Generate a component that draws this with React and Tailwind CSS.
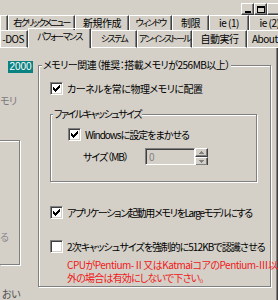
import React from 'react';

const face = 'bg-[#d4d0c8]';

const Check = ({ checked }) => (
    <span className="flex h-[13px] w-[13px] shrink-0 items-center justify-center border border-t-[#808080] border-l-[#808080] border-r-white border-b-white bg-white shadow-[inset_1px_1px_0_#404040,inset_-1px_-1px_0_#d4d0c8]">
        {checked && (
            <svg width="7" height="7" viewBox="0 0 7 7" shapeRendering="crispEdges">
                <polygon points="0,2 2,4 7,-1 7,2 2,7 0,5" fill="#000" />
            </svg>
        )}
    </span>
);

const CheckRow = ({ checked, children, className = '', text = '' }) => (
    <div className={`flex items-center gap-[4px] whitespace-nowrap ${className}`}>
        <Check checked={checked} />
        <span className={text}>{children}</span>
    </div>
);

const WinBtn = ({ children }) => (
    <span className="flex h-[12px] w-[13px] shrink-0 items-center justify-center border border-t-white border-l-white border-r-[#404040] border-b-[#404040] bg-[#d4d0c8] shadow-[inset_-1px_-1px_0_#808080]">
        {children}
    </span>
);

const Tab = ({ w, children, last, kana }) => (
    <div
        className={`flex h-full shrink-0 items-center justify-center whitespace-nowrap border-t border-l border-white ${last ? '' : 'border-r border-r-[#404040] shadow-[inset_-1px_0_0_#808080]'} ${kana ? 'text-[9px] tracking-[-1.7px]' : ''} ${w}`}
    >
        {children}
    </div>
);

const Tab2 = ({ w, children, selected, last, kana }) => (
    <div
        className={`flex shrink-0 items-center justify-center whitespace-nowrap border-t border-l border-white ${last ? '' : 'border-r border-r-[#404040] shadow-[inset_-1px_0_0_#808080]'} ${selected ? 'h-[20px] pb-[3px]' : 'h-[18px] border-b pb-[1px]'} ${kana ? 'text-[9px] tracking-[-1.6px]' : ''} ${w}`}
    >
        {children}
    </div>
);

const SpinBtn = ({ up }) => (
    <span className="flex h-[9px] w-[13px] items-center justify-center border border-t-white border-l-white border-r-[#404040] border-b-[#404040] bg-[#d4d0c8] shadow-[inset_-1px_-1px_0_#808080]">
        <svg width="5" height="3" viewBox="0 0 5 3" shapeRendering="crispEdges">
            <polygon points={up ? '2.5,0 5,3 0,3' : '0,0 5,0 2.5,3'} fill="#808080" />
        </svg>
    </span>
);

export default function App() {
    return (
        <div className={`h-[300px] w-[278px] overflow-hidden ${face} font-['Noto_Sans_CJK_JP',sans-serif] text-[10px] leading-[12px] tracking-[-0.5px] text-black [font-feature-settings:'palt']`}>
            {/* window buttons */}
            <div className="flex h-[15px] items-start pt-[3px] pl-[241px]">
                <WinBtn>
                    <span className="mt-[5px] h-[2px] w-[6px] bg-black" />
                </WinBtn>
                <WinBtn>
                    <span className="h-[7px] w-[8px] border border-t-2 border-black" />
                </WinBtn>
                <WinBtn />
            </div>

            {/* back tab row */}
            <div className="flex h-[15px]">
                <Tab w="w-[8px]" />
                <Tab w="w-[67px]" kana>右クリックメニュー</Tab>
                <Tab w="w-[54px]">新規作成</Tab>
                <Tab w="w-[43px]" kana>ウィンドウ</Tab>
                <Tab w="w-[37px]">制限</Tab>
                <Tab w="w-[40px]">ie (1)</Tab>
                <Tab w="w-[40px]" last>ie (2)</Tab>
            </div>

            {/* front tab row */}
            <div className="flex h-[18px] items-end">
                <Tab2 w="w-[28px] justify-end pr-[3px]">-DOS</Tab2>
                <Tab2 w="w-[63px]" selected kana>パフォーマンス</Tab2>
                <Tab2 w="w-[46px]" kana>システム</Tab2>
                <Tab2 w="w-[55px]" kana>アンインストール</Tab2>
                <Tab2 w="w-[55px]">自動実行</Tab2>
                <Tab2 w="w-[40px] justify-start pl-[4px]" last>About</Tab2>
            </div>

            {/* page */}
            <div className="flex h-[252px] w-[278px] border-r border-r-[#404040] shadow-[inset_-1px_0_0_#808080]">
                <div className="flex w-[38px] shrink-0 flex-col overflow-hidden">
                    <div className="mt-[13px] ml-[8px] flex h-[12px] w-[25px] items-center justify-center bg-[#0a8282] font-['Liberation_Sans',sans-serif] tracking-normal text-white">
                        2000
                    </div>
                    <div className="mt-[22px] whitespace-nowrap text-[#7a7a7a]">モリ</div>
                    <div className="mt-[33px] flex h-[129px] w-[20px] flex-col justify-end border-y border-r border-[#808080] pb-[21px] shadow-[inset_0_1px_0_#fff,1px_1px_0_#fff]">
                        <span className="text-[#8a8a8a]">る</span>
                    </div>
                    <div className="mt-[23px] ml-[2px] whitespace-nowrap text-[#505050]">おい</div>
                </div>

                <fieldset className="mt-[11px] h-[228px] w-[233px] min-w-0 shrink-0 border border-[#808080] shadow-[inset_1px_1px_0_#fff,1px_1px_0_#fff]">
                    <legend className="ml-[3px] bg-[#d4d0c8] px-[1px] leading-[12px] whitespace-nowrap">
                        メモリー関連（推奨：搭載メモリが256MB以上）
                    </legend>

                    <CheckRow checked className="mt-[11px] ml-[11px]">
                        カーネルを常に物理メモリに配置
                    </CheckRow>

                    <fieldset className="mt-[13px] ml-[11px] w-[207px] min-w-0 border border-[#808080] pb-[16px] shadow-[inset_1px_1px_0_#fff,1px_1px_0_#fff]">
                        <legend className="ml-[2px] bg-[#d4d0c8] px-[1px] leading-[12px] whitespace-nowrap tracking-[-1.5px]">
                            ファイルキャッシュサイズ
                        </legend>
                        <CheckRow checked className="mt-[8px] ml-[17px]" text="tracking-[-1px]">
                            Windowsに設定をまかせる
                        </CheckRow>
                        <div className="mt-[7px] ml-[32px] flex items-center">
                            <span className="w-[62px] whitespace-nowrap tracking-[-1px]">サイズ（MB）</span>
                            <span className="flex h-[17px] w-[50px] items-center border border-t-[#808080] border-l-[#808080] border-r-white border-b-white bg-[#d4d0c8] pl-[3px] text-[#808080] shadow-[inset_1px_1px_0_#404040,inset_-1px_-1px_0_#d4d0c8]">
                                0
                            </span>
                            <span className="flex flex-col">
                                <SpinBtn up />
                                <span className="h-[8px] overflow-hidden">
                                    <SpinBtn />
                                </span>
                            </span>
                        </div>
                    </fieldset>

                    <CheckRow checked className="mt-[24px] ml-[11px]" text="tracking-[-1.3px]">
                        アプリケーション起動用メモリをLargeモデルにする
                    </CheckRow>
                    <CheckRow className="mt-[21px] ml-[11px]" text="tracking-[-0.9px]">
                        2次キャッシュサイズを強制的に512KBで認識させる
                    </CheckRow>
                    <div className="mt-[6px] ml-[28px] flex flex-col gap-[1px] text-[#f01818]">
                        <span className="h-[12px] whitespace-nowrap leading-[12px] tracking-[-0.5px]">
                            CPUがPentium-Ⅱ又はKatmaiコアのPentium-Ⅲ以
                        </span>
                        <span className="h-[12px] whitespace-nowrap leading-[12px] tracking-[-0.8px]">
                            外の場合は有効にしないで下さい。
                        </span>
                    </div>
                </fieldset>
            </div>
        </div>
    );
}
